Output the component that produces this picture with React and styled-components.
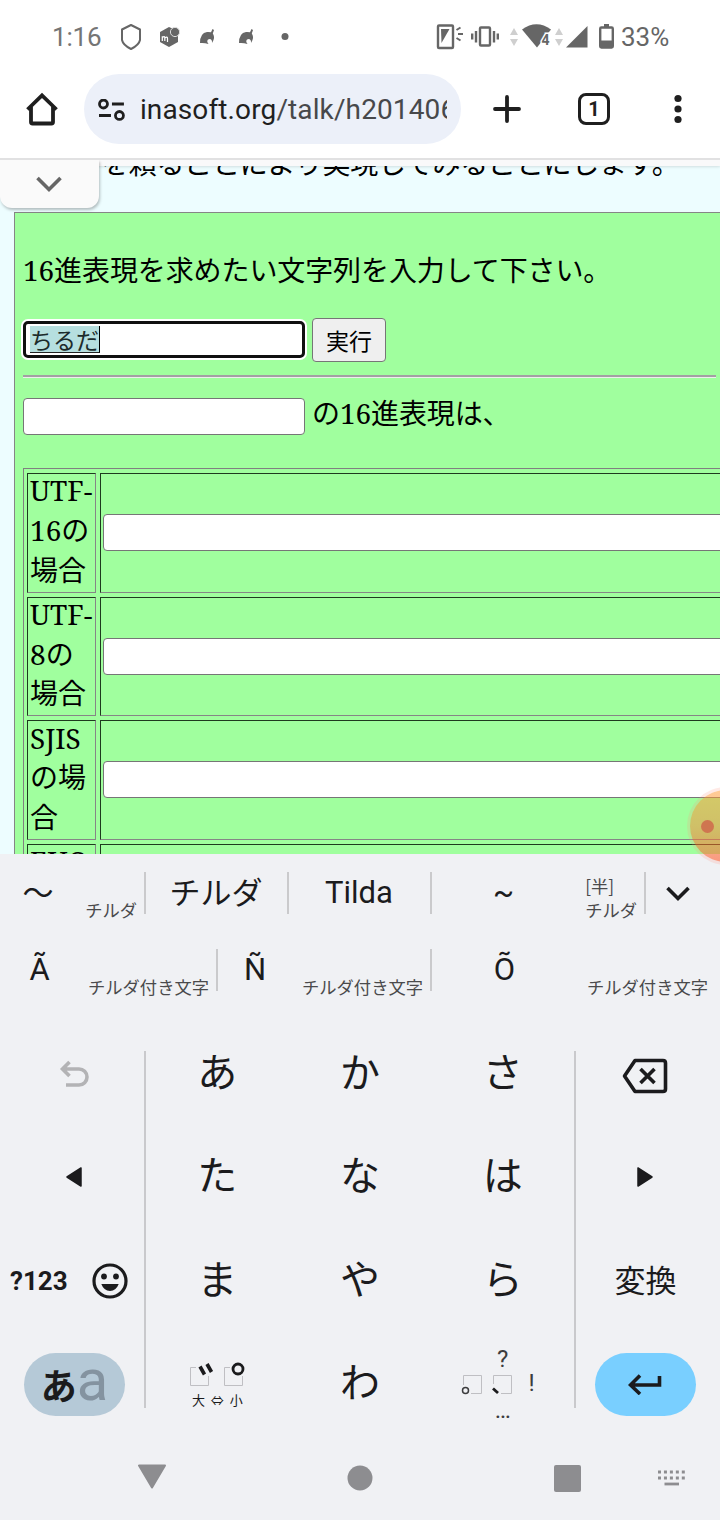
import React, { useState } from 'react';
import styled, { createGlobalStyle } from 'styled-components';

const GlobalStyle = createGlobalStyle`
  * {
    box-sizing: border-box;
  }
  body {
    margin: 0;
    background: #fff;
  }
`;

const sans = `Roboto, 'Noto Sans CJK JP', sans-serif`;
const jp = `'Noto Sans CJK JP', sans-serif`;
const serif = `'Noto Serif', 'DejaVu Serif Condensed', 'DejaVu Serif', 'Noto Sans CJK JP', serif`;

const Screen = styled.div`
  width: 720px;
  height: 1520px;
  display: flex;
  flex-direction: column;
  overflow: hidden;
  position: relative;
  font-family: ${sans};
`;

/* status bar */

const StatusBar = styled.div`
  height: 74px;
  padding-left: 52px;
  display: flex;
  align-items: center;
  color: #666;
  font-size: 26px;
  line-height: 30px;
  flex-shrink: 0;
`;

const Clock = styled.span`
  width: 68px;
  color: #757575;
  letter-spacing: -0.2px;
`;

const StatusIcon = styled.svg`
  display: block;
  flex-shrink: 0;
  margin-left: ${(props) => props.$gap || 0}px;
`;

const Battery = styled.span`
  margin-left: 7px;
`;

/* browser toolbar */

const Toolbar = styled.div`
  height: 86px;
  padding: 0 0 14px 23px;
  display: flex;
  align-items: center;
  border-bottom: 2px solid #e1e1e2;
  flex-shrink: 0;
`;

const IconButton = styled.button`
  width: ${(props) => props.$width}px;
  height: ${(props) => props.$height || 68}px;
  padding: 0;
  border: none;
  background: none;
  display: flex;
  align-items: center;
  justify-content: center;
`;

const AddressBar = styled.div`
  width: 377px;
  height: 70px;
  margin: 0 10px 0 24px;
  padding: 2px 14px 0;
  border-radius: 35px;
  background: #ecf0f9;
  display: flex;
  align-items: center;
`;

const Url = styled.div`
  width: 308px;
  margin-left: 15px;
  overflow: hidden;
  white-space: nowrap;
  font-size: 28px;
  line-height: 36px;
  letter-spacing: 0.12px;
  color: #47484b;
`;

const Host = styled.span`
  color: #1f1f1f;
`;

const TabCount = styled.div`
  width: 32px;
  height: 32px;
  border: 3px solid #1f1f1f;
  border-radius: 8px;
  font: bold 20px/26px ${sans};
  text-align: center;
  color: #1f1f1f;
`;

/* web page */

const Page = styled.div`
  height: 694px;
  flex-shrink: 0;
  position: relative;
  overflow: hidden;
  background: #edfdff;
  font-family: ${serif};
  font-size: 28px;
  color: #000;
`;

const Strip = styled.div`
  height: 6px;
  position: relative;
  z-index: 1;
  background: #f9f9fa;
  box-shadow: 0 1px 3px rgba(0, 0, 0, 0.12);
`;

const PullTab = styled.div`
  position: absolute;
  top: 0;
  left: 0;
  z-index: 2;
  width: 99px;
  height: 48px;
  padding-right: 2px;
  border-radius: 0 0 12px 12px;
  background: #fafafa;
  box-shadow: 1px 2px 3px rgba(0, 0, 0, 0.25);
  clip-path: inset(0 -8px -8px 0);
  display: flex;
  align-items: center;
  justify-content: center;
`;

const Paragraph = styled.p`
  margin: -23px 0 0 101px;
  height: 69px;
  line-height: 40px;
  white-space: nowrap;
  letter-spacing: -0.25px;
`;

const Panel = styled.div`
  width: 800px;
  height: 700px;
  margin-left: 14px;
  padding: 37px 0 0 8px;
  border: 1px solid #868686;
  background: #a0ff9e;
`;

const Prompt = styled.div`
  height: 68px;
  line-height: 40px;
  white-space: nowrap;
  letter-spacing: -0.1px;
`;

const Row = styled.div`
  display: flex;
  align-items: center;
`;

const TextField = styled.div`
  width: ${(props) => props.$width || 282}px;
  height: 37px;
  flex-shrink: 0;
  padding: 0 6px;
  border: 1px solid #767676;
  border-radius: 4px;
  background: #fff;
  font: 23px/28px ${jp};
`;

const FocusedField = styled(TextField)`
  margin-bottom: 2px;
  border: 3px solid #101010;
  border-radius: 5px;
  box-shadow: 0 0 0 2px #fff;
  padding: 1px 4px;
`;

const Composing = styled.span`
  display: inline-block;
  height: 27px;
  line-height: 26px;
  background: #b6dfdf;
  border-bottom: 1px solid #222;
  border-right: 1px solid #000;
  color: #1c2b2b;
`;

const RunButton = styled.button`
  width: 74px;
  height: 44px;
  margin-left: 7px;
  padding: 0;
  border: 1px solid #767676;
  border-radius: 4px;
  background: #efefef;
  color: #000;
  font: 23px/40px ${jp};
`;

const Rule = styled.div`
  width: 693px;
  height: 3px;
  margin: 13px 0 20px;
  border-top: 2px solid #a3a0a3;
  border-bottom: 1px solid #eee;
`;

const ResultLabel = styled.span`
  margin: -7px 0 0 7px;
  line-height: 36px;
  letter-spacing: -0.1px;
`;

const Table = styled.div`
  width: 780px;
  margin-top: 33px;
  padding: 4px 0 0 3px;
  border: 1px solid #808080;
  display: grid;
  grid-template-columns: 69px 700px;
  gap: 4px;
  grid-auto-rows: 119.6px;
`;

const Cell = styled.div`
  padding: 0 0 ${(props) => (props.$label ? 4 : 0)}px 2px;
  border-style: solid;
  border-width: 1px;
  border-color: #1e3a1e #868686 #868686 #1e3a1e;
  line-height: 39.6px;
  white-space: pre;
  display: flex;
  align-items: center;
  overflow: hidden;
`;

/* floating shortcut at the right edge */

const Bubble = styled.div`
  position: absolute;
  top: 790px;
  left: 690px;
  width: 72px;
  height: 72px;
  border-radius: 50%;
  background: linear-gradient(rgba(255, 160, 60, 0.55), rgba(255, 130, 50, 0.5) 50%, rgba(255, 95, 50, 0.6));
  box-shadow: 0 0 0 3px rgba(255, 150, 130, 0.2);
  padding: 30px 0 0 11px;
`;

const BubbleDot = styled.div`
  width: 13px;
  height: 13px;
  border-radius: 50%;
  background: #cf7650;
`;

/* keyboard */

const Keyboard = styled.div`
  flex: 1;
  background: #f0f1f4;
  color: #1b1b1d;
`;

const Candidates = styled.div`
  height: ${(props) => props.$height}px;
  display: flex;
`;

const Candidate = styled.div`
  width: ${(props) => props.$width}px;
  height: 77px;
  padding-right: ${(props) => (props.$last ? 12 : 8)}px;
  display: flex;
  align-items: center;
`;

const Word = styled.div`
  flex: 1;
  padding: 0 0 ${(props) => (props.$kana ? 4 : 0)}px ${(props) => (props.$alone ? 7 : 0)}px;
  text-align: center;
  font: 31px/36px ${(props) => (props.$kana ? jp : sans)};
`;

const Reading = styled.div`
  align-self: flex-end;
  padding: 0 0 9px 9px;
  font: 17.3px/24px ${jp};
  color: #4a4a4c;
  white-space: pre;
`;

const Divider = styled.div`
  width: 2px;
  height: 42px;
  margin: 18px -1px 0;
  background: #cacacc;
`;

const Keys = styled.div`
  height: 414px;
  display: flex;
`;

const KeyDivider = styled.div`
  width: 2px;
  height: 357px;
  margin-top: 29px;
  background: #c9c9cc;
`;

const SideKeys = styled.div`
  width: 144px;
  display: grid;
  grid-template-rows: repeat(4, 103.5px);
`;

const KanaKeys = styled.div`
  width: 428px;
  display: grid;
  grid-template: repeat(4, 103.5px) / repeat(3, 1fr);
`;

const Key = styled.div`
  display: flex;
  flex-direction: ${(props) => (props.$stack ? 'column' : 'row')};
  align-items: center;
  justify-content: center;
  font: ${(props) => props.$size || 40}px/48px ${jp};
  padding: ${(props) => props.$pad || '0'};
`;

const SymbolLabel = styled.span`
  width: 60px;
  margin-right: 22px;
  font: 700 26px/30px Roboto, sans-serif;
`;

const ModePill = styled.div`
  width: 101px;
  height: 63px;
  border-radius: 32px;
  background: #b5c9d7;
  display: flex;
  align-items: baseline;
  justify-content: center;
`;

const ModeKana = styled.b`
  font: bold 36px/54px ${jp};
`;

const ModeLatin = styled.span`
  font: 400 58px/54px Roboto, sans-serif;
  color: #8493a0;
`;

const EnterPill = styled(ModePill)`
  background: #79cfff;
  align-items: center;
`;

const SizeLabel = styled.div`
  margin-top: 4px;
  font: 13px/18px ${jp};
  word-spacing: 3px;
  white-space: nowrap;
`;

const Punct = styled.span`
  font: 24px/24px Roboto, sans-serif;
  color: #3c3c3e;
`;

const PunctRow = styled.div`
  display: flex;
  align-items: center;
  height: 24px;
  margin: 0 18px 3px 0;
`;

const NavBar = styled.div`
  height: 84px;
  display: flex;
  align-items: center;
`;

const NavIcon = styled.svg`
  display: block;
  margin-left: ${(props) => props.$gap}px;
`;

const kana = ['あ', 'か', 'さ', 'た', 'な', 'は', 'ま', 'や', 'ら'];
const encodings = ['UTF-\n16の\n場合', 'UTF-\n8の\n場合', 'SJIS\nの場\n合', 'EUC\nの場\n合'];

const Leaf = ({ gap }) => (
  <StatusIcon $gap={gap} width="16" height="16" viewBox="0 0 16 16">
    <path
      d="M1 14Q1 4 8 3Q10.500 2.800 12 3.300L13.500 0 15 1 13.800 4.500Q16 8 14.300 11.500L13 14Q13.300 10.500 11 10Q8 10 8.300 13L9.500 15Q5 13.500 1 14Z"
      fill="#666"
    />
  </StatusIcon>
);

const DataArrows = ({ gap }) => (
  <StatusIcon $gap={gap} width="8" height="18" viewBox="0 0 8 18">
    <path d="M4 0 8 7H0ZM0 11H8L4 18Z" fill="#cfcfcf" />
  </StatusIcon>
);

const Status = () => (
  <StatusBar>
    <Clock>1:16</Clock>
    <StatusIcon width="22" height="28" viewBox="0 0 22 28">
      <path
        d="M11 2 20 6.500V17Q19 22 11 26 3 22 2 17V6.500Z"
        fill="none"
        stroke="#666"
        strokeWidth="2"
        strokeLinejoin="round"
      />
    </StatusIcon>
    <StatusIcon $gap={17} width="22" height="22" viewBox="0 0 22 22">
      <path d="M1 6 10 1 19 5V16L10 21 1 16Z" fill="#666" />
      <circle cx="16" cy="6" r="4.600" fill="#666" stroke="#ddd" strokeWidth="1" />
      <path
        d="M3.300 15V10.300M3.300 11.500Q5.800 9.500 5.800 12V15M5.800 12Q8.500 10 8.500 12.400V16"
        fill="none"
        stroke="#fff"
        strokeWidth="1.200"
      />
    </StatusIcon>
    <Leaf gap={18} />
    <Leaf gap={23} />
    <StatusIcon $gap={27} width="8" height="8" viewBox="0 0 8 8">
      <circle cx="4" cy="3.500" r="3.500" fill="#666" />
    </StatusIcon>
    <StatusIcon $gap={147} width="27" height="26" viewBox="0 0 27 26">
      <rect x="2" y="1.500" width="15" height="22.500" rx="1" fill="none" stroke="#666" strokeWidth="2.400" />
      <path d="M5 5H13.500L5.500 19Z" fill="#666" />
      <path d="M20.500 6 24.500 3.500M22 10H27M20.500 14 24.500 16.500" stroke="#666" strokeWidth="2" />
    </StatusIcon>
    <StatusIcon $gap={8} width="28" height="22" viewBox="0 0 28 22">
      <rect x="9" y="1.500" width="10" height="18" rx="1" fill="none" stroke="#666" strokeWidth="2.400" />
      <path d="M5 5V16.500M23 5V16.500M1.200 7.500V13.500M26.800 7.500V13.500" stroke="#666" strokeWidth="2.400" />
    </StatusIcon>
    <DataArrows gap={11} />
    <StatusIcon $gap={4} width="30" height="26" viewBox="0 0 30 26">
      <path d="M0 5.500Q14.500-5 29 5.500L15 23.500Z" fill="#666" />
      <text
        x="19.500"
        y="21"
        fontSize="14"
        fontWeight="700"
        fontFamily="Roboto, sans-serif"
        fill="#666"
        stroke="#fff"
        strokeWidth="3"
        paintOrder="stroke"
      >
        4
      </text>
    </StatusIcon>
    <DataArrows gap={3} />
    <StatusIcon $gap={3} width="23" height="23" viewBox="0 0 23 23">
      <path d="M21.500 0V21.500H0Z" fill="#666" />
    </StatusIcon>
    <StatusIcon $gap={10} width="15" height="26" viewBox="0 0 15 26">
      <path d="M5 0H10V3H5Z" fill="#666" />
      <rect x="1.200" y="3.500" width="12.600" height="20" rx="1.200" fill="#fff" stroke="#666" strokeWidth="2.400" />
      <path d="M1 16.500H14V24H1Z" fill="#666" />
    </StatusIcon>
    <Battery>33%</Battery>
  </StatusBar>
);

const BrowserBar = () => (
  <Toolbar>
    <IconButton $width={37}>
      <svg width="32" height="34" viewBox="0 0 32 34">
        <path
          d="M1.500 17.500 16 3.500 30.500 17.500M5 14.500V30Q5 31.500 6.500 31.500H25.500Q27 31.500 27 30V14.500"
          fill="none"
          stroke="#1f1f1f"
          strokeWidth="3.800"
        />
      </svg>
    </IconButton>
    <AddressBar>
      <svg width="27" height="23" viewBox="0 0 27 23">
        <circle cx="5.500" cy="5" r="4" fill="none" stroke="#1f1f1f" strokeWidth="2.800" />
        <circle cx="21.500" cy="16.500" r="4" fill="none" stroke="#1f1f1f" strokeWidth="2.800" />
        <path d="M14 5H26M1 16.500H13" stroke="#1f1f1f" strokeWidth="2.800" />
      </svg>
      <Url>
        <Host>inasoft.org</Host>/talk/h201406
      </Url>
    </AddressBar>
    <IconButton $width={72}>
      <svg width="28" height="28" viewBox="0 0 28 28">
        <path d="M14 2V26M2 14H26" stroke="#1f1f1f" strokeWidth="3.800" strokeLinecap="round" />
      </svg>
    </IconButton>
    <IconButton $width={102}>
      <TabCount>1</TabCount>
    </IconButton>
    <IconButton $width={66}>
      <svg width="8" height="30" viewBox="0 0 8 30">
        <circle cx="4" cy="4.500" r="3.600" fill="#1f1f1f" />
        <circle cx="4" cy="15" r="3.600" fill="#1f1f1f" />
        <circle cx="4" cy="25.500" r="3.600" fill="#1f1f1f" />
      </svg>
    </IconButton>
  </Toolbar>
);

const WebPage = ({ text }) => (
  <Page>
    <Strip />
    <PullTab>
      <svg width="28" height="18" viewBox="0 0 28 18">
        <path d="M2.500 3 14 14.500 25.500 3" fill="none" stroke="#666" strokeWidth="3.600" />
      </svg>
    </PullTab>
    <Paragraph>を頼ることにより実現してみることにします。</Paragraph>
    <Panel>
      <Prompt>16進表現を求めたい文字列を入力して下さい。</Prompt>
      <Row>
        <FocusedField>
          <Composing>{text}</Composing>
        </FocusedField>
        <RunButton>実行</RunButton>
      </Row>
      <Rule />
      <Row>
        <TextField />
        <ResultLabel>の16進表現は、</ResultLabel>
      </Row>
      <Table>
        {encodings.map((name) => (
          <React.Fragment key={name}>
            <Cell $label>{name}</Cell>
            <Cell>
              <TextField $width={690} />
            </Cell>
          </React.Fragment>
        ))}
      </Table>
    </Panel>
  </Page>
);

const NavButtons = () => (
  <NavBar>
    <NavIcon $gap={138} width="28" height="28" viewBox="0 0 28 28">
      <path d="M1 1.500H27L14 23.500Z" fill="#8d8d90" stroke="#8d8d90" strokeWidth="2" strokeLinejoin="round" />
    </NavIcon>
    <NavIcon $gap={181} width="26" height="26" viewBox="0 0 26 26">
      <circle cx="13" cy="13" r="12.500" fill="#8d8d90" />
    </NavIcon>
    <NavIcon $gap={181} width="27" height="27" viewBox="0 0 27 27">
      <rect width="27" height="27" rx="2" fill="#8d8d90" />
    </NavIcon>
    <NavIcon $gap={77} width="28" height="16" viewBox="0 0 28 16">
      <path d="M0 2H28M0 8H28" stroke="#8d8d90" strokeWidth="3" strokeDasharray="3 2.950" fill="none" />
      <path d="M6.500 14H21" stroke="#8d8d90" strokeWidth="2.800" />
    </NavIcon>
  </NavBar>
);

const App = () => {
  const [text] = useState('ちるだ');

  return (
    <Screen>
      <GlobalStyle />
      <Status />
      <BrowserBar />
      <WebPage text={text} />
      <Keyboard>
        <Candidates $height={77}>
          <Candidate $width={145}>
            <Word $kana>〜</Word>
            <Reading>チルダ</Reading>
          </Candidate>
          <Divider />
          <Candidate $width={143}>
            <Word $kana $alone>
              チルダ
            </Word>
          </Candidate>
          <Divider />
          <Candidate $width={143}>
            <Word $alone>Tilda</Word>
          </Candidate>
          <Divider />
          <Candidate $width={214}>
            <Word>~</Word>
            <Reading>{'[半]\nチルダ'}</Reading>
          </Candidate>
          <Divider />
          <IconButton $width={66} $height={77}>
            <svg width="26" height="18" viewBox="0 0 26 18">
              <path d="M2.500 4 13 14.500 23.500 4" fill="none" stroke="#1b1b1d" strokeWidth="3.600" />
            </svg>
          </IconButton>
        </Candidates>
        <Candidates $height={91}>
          <Candidate $width={217}>
            <Word>Ã</Word>
            <Reading>チルダ付き文字</Reading>
          </Candidate>
          <Divider />
          <Candidate $width={214}>
            <Word>Ñ</Word>
            <Reading>チルダ付き文字</Reading>
          </Candidate>
          <Divider />
          <Candidate $width={289} $last>
            <Word>Õ</Word>
            <Reading>チルダ付き文字</Reading>
          </Candidate>
        </Candidates>
        <Keys>
          <SideKeys>
            <Key $pad="0 0 0 4px">
              <svg width="30" height="28" viewBox="0 0 30 28">
                <path
                  d="M10.500 2 3.500 9 10.500 16M4 9H20A8 8 0 0 1 20 25H7"
                  fill="none"
                  stroke="#b3b3b5"
                  strokeWidth="3.600"
                />
              </svg>
            </Key>
            <Key $pad="0 0 0 4px">
              <svg width="18" height="22" viewBox="0 0 18 22">
                <path d="M16 2V20L2 11Z" fill="#1b1b1d" stroke="#1b1b1d" strokeWidth="1.500" strokeLinejoin="round" />
              </svg>
            </Key>
            <Key $pad="0 6px 0 0">
              <SymbolLabel>?123</SymbolLabel>
              <svg width="36" height="36" viewBox="0 0 36 36">
                <circle cx="18" cy="18" r="16" fill="none" stroke="#1b1b1d" strokeWidth="3.200" />
                <circle cx="12" cy="13.500" r="2.900" fill="#1b1b1d" />
                <circle cx="24" cy="13.500" r="2.900" fill="#1b1b1d" />
                <path d="M9.300 21H26.700Q24 28 18 28T9.300 21Z" fill="#1b1b1d" />
              </svg>
            </Key>
            <Key $pad="0 0 0 5px">
              <ModePill>
                <ModeKana>あ</ModeKana>
                <ModeLatin>a</ModeLatin>
              </ModePill>
            </Key>
          </SideKeys>
          <KeyDivider />
          <KanaKeys>
            {kana.map((k) => (
              <Key key={k} $pad="0 0 8px">
                {k}
              </Key>
            ))}
            <Key $stack $pad="1px 0 0 0">
              <svg width="56" height="26" viewBox="0 0 56 26">
                <path d="M7 6.500H1.500V24.500H19.500V15M41 6.500H35.500V24.500H53.500V15" fill="none" stroke="#bfbfc3" />
                <path d="M11 5.500 15.500 13.500M18 3 22.500 11" stroke="#1b1b1d" strokeWidth="3.600" />
                <circle cx="49" cy="8" r="5" fill="none" stroke="#1b1b1d" strokeWidth="2.800" />
              </svg>
              <SizeLabel>大 ⇔ 小</SizeLabel>
            </Key>
            <Key $pad="0 0 8px">わ</Key>
            <Key $stack>
              <Punct>?</Punct>
              <PunctRow>
                <svg width="76" height="24" viewBox="0 0 76 24">
                  <path d="M10.500 14V4.500H28.500V22.500H18M40.500 13V4.500H58.500V22.500H48" fill="none" stroke="#bfbfc3" />
                  <circle cx="12.500" cy="19.500" r="3" fill="none" stroke="#3c3c3e" strokeWidth="1.500" />
                  <path d="M40 17.500 45 22" stroke="#1b1b1d" strokeWidth="2.800" />
                </svg>
                <Punct>!</Punct>
              </PunctRow>
              <Punct>…</Punct>
            </Key>
          </KanaKeys>
          <KeyDivider />
          <SideKeys>
            <Key $pad="5px 6px 0 0">
              <svg width="46" height="36" viewBox="0 0 46 36">
                <path
                  d="M13 2.500H41Q43.500 2.500 43.500 5V31Q43.500 33.500 41 33.500H13L2.500 18Z"
                  fill="none"
                  stroke="#1b1b1d"
                  strokeWidth="3.600"
                  strokeLinejoin="round"
                />
                <path d="M18.500 11 32.500 25M32.500 11 18.500 25" stroke="#1b1b1d" strokeWidth="3.600" />
              </svg>
            </Key>
            <Key $pad="0 6px 0 0">
              <svg width="18" height="22" viewBox="0 0 18 22">
                <path d="M2 2V20L16 11Z" fill="#1b1b1d" stroke="#1b1b1d" strokeWidth="1.500" strokeLinejoin="round" />
              </svg>
            </Key>
            <Key $size={31} $pad="0 5px 4px 0">
              変換
            </Key>
            <Key $pad="0 6px 0 0">
              <EnterPill>
                <svg width="34" height="22" viewBox="0 0 34 22">
                  <path d="M12 2.500 2.500 12 12 21M3 12H31.500V3" fill="none" stroke="#1b1b1d" strokeWidth="3.600" />
                </svg>
              </EnterPill>
            </Key>
          </SideKeys>
        </Keys>
        <NavButtons />
      </Keyboard>
      <Bubble>
        <BubbleDot />
      </Bubble>
    </Screen>
  );
};

export default App;
